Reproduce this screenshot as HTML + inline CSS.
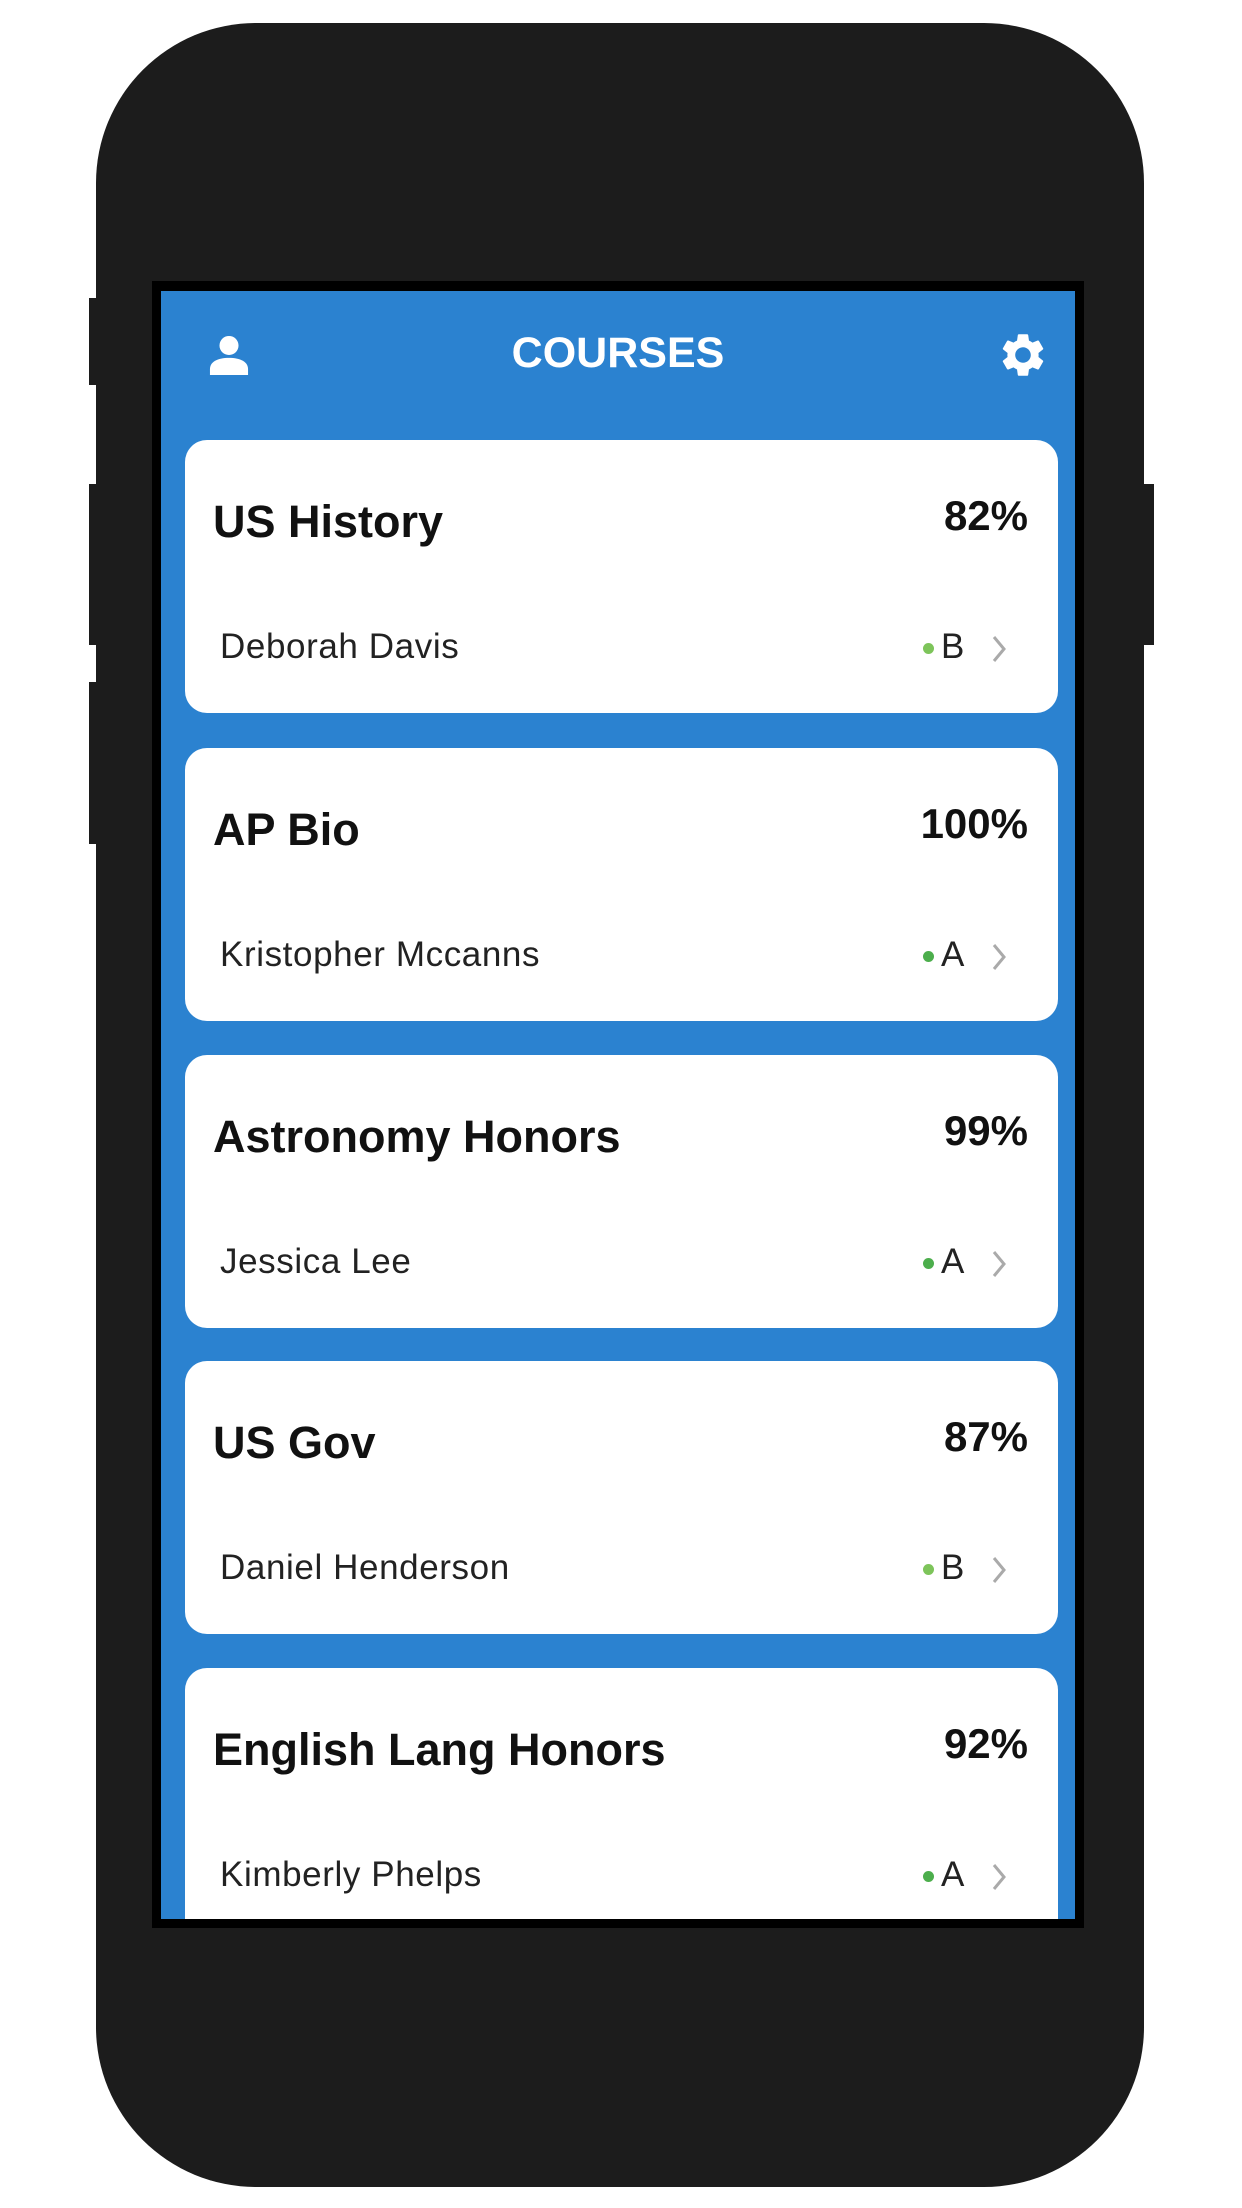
<!DOCTYPE html>
<html><head><meta charset="utf-8"><style>
*{margin:0;padding:0;box-sizing:border-box}
body{width:1242px;height:2208px;background:#fff;position:relative;overflow:hidden;font-family:"Liberation Sans",sans-serif}
.ph{position:absolute;left:96px;top:23px;width:1048px;height:2164px;background:#1c1c1c;border-radius:160px}
.btn{position:absolute;background:#1c1c1c}
.scr{position:absolute;left:152px;top:281px;width:932px;height:1647px;background:#000}
.blue{position:absolute;left:161px;top:291px;width:914px;height:1628px;background:#2b82d0;overflow:hidden}
.hd{position:absolute;width:100%;text-align:center;color:#fff;font-size:43px;font-weight:bold;left:0}
.card{position:absolute;left:24px;width:873px;height:273px;background:#fff;border-radius:22px}
.t{position:absolute;left:28px;top:56px;font-size:45px;font-weight:bold;color:#111}
.p{position:absolute;right:30px;top:52px;font-size:42px;font-weight:bold;color:#111}
.n{position:absolute;left:35px;top:187px;font-size:35px;letter-spacing:0.6px;color:#222}
.dot{position:absolute;left:738px;top:203px;width:11px;height:11px;border-radius:50%;background:#7dc45a}
.g{position:absolute;left:756px;top:187px;font-size:35px;color:#222}
.ch{position:absolute;left:806px;top:194px}
</style></head><body>
<div class="btn" style="left:89px;top:298px;width:12px;height:87px"></div>
<div class="btn" style="left:89px;top:484px;width:12px;height:161px"></div>
<div class="btn" style="left:89px;top:682px;width:12px;height:162px"></div>
<div class="btn" style="left:1140px;top:484px;width:14px;height:161px"></div>
<div class="ph"></div>
<div class="scr"></div>
<div class="blue">
<svg style="position:absolute;left:47px;top:44px" width="42" height="40" viewBox="0 0 44 42"><circle cx="22" cy="11" r="10" fill="#fff"/><path d="M2 42 v-6 c0-8 8-12 20-12 s20 4 20 12 v6z" fill="#fff"/></svg>
<div class="hd" style="top:38px">COURSES</div>
<svg style="position:absolute;left:836px;top:38px" width="52" height="52" viewBox="0 0 24 24"><path fill="#fff" d="M19.14 12.94c.04-.3.06-.61.06-.94 0-.32-.02-.64-.07-.94l2.030-1.58a.49.49 0 0 0 .12-.61l-1.92-3.32a.488.488 0 0 0-.59-.22l-2.39.96c-.5-.38-1.03-.7-1.62-.94l-.36-2.54a.484.484 0 0 0-.48-.41h-3.84c-.24 0-.43.17-.47.41l-.36 2.54c-.59.24-1.130.57-1.62.94l-2.39-.96c-.22-.08-.47 0-.59.22L2.74 8.87c-.12.21-.08.47.12.61l2.03 1.58c-.05.3-.09.63-.09.94s.02.64.07.94l-2.03 1.58a.49.49 0 0 0-.12.61l1.92 3.32c.12.22.37.29.59.22l2.39-.96c.5.38 1.03.7 1.62.94l.36 2.54c.05.24.24.41.48.41h3.84c.24 0 .44-.17.47-.41l.36-2.54c.59-.24 1.13-.56 1.62-.94l2.39.96c.22.08.47 0 .59-.22l1.92-3.32c.12-.22.07-.47-.12-.61l-2.01-1.58zM12 15.6c-1.98 0-3.6-1.62-3.6-3.6s1.62-3.6 3.6-3.6 3.6 1.62 3.6 3.6-1.62 3.6-3.6 3.6z"/></svg>

<div class="card" style="top:149px"><div class="t">US History</div><div class="p">82%</div><div class="n">Deborah Davis</div><div class="dot"></div><div class="g">B</div><svg class="ch" width="16" height="30" viewBox="0 0 16 30"><path d="M3 3 L13 15 L3 27" stroke="#aaa" stroke-width="3" fill="none"/></svg></div>
<div class="card" style="top:457px"><div class="t">AP Bio</div><div class="p">100%</div><div class="n">Kristopher Mccanns</div><div class="dot" style="background:#4cae4c"></div><div class="g">A</div><svg class="ch" width="16" height="30" viewBox="0 0 16 30"><path d="M3 3 L13 15 L3 27" stroke="#aaa" stroke-width="3" fill="none"/></svg></div>
<div class="card" style="top:764px"><div class="t">Astronomy Honors</div><div class="p">99%</div><div class="n">Jessica Lee</div><div class="dot" style="background:#4cae4c"></div><div class="g">A</div><svg class="ch" width="16" height="30" viewBox="0 0 16 30"><path d="M3 3 L13 15 L3 27" stroke="#aaa" stroke-width="3" fill="none"/></svg></div>
<div class="card" style="top:1070px"><div class="t">US Gov</div><div class="p">87%</div><div class="n">Daniel Henderson</div><div class="dot"></div><div class="g">B</div><svg class="ch" width="16" height="30" viewBox="0 0 16 30"><path d="M3 3 L13 15 L3 27" stroke="#aaa" stroke-width="3" fill="none"/></svg></div>
<div class="card" style="top:1377px"><div class="t">English Lang Honors</div><div class="p">92%</div><div class="n">Kimberly Phelps</div><div class="dot" style="background:#4cae4c"></div><div class="g">A</div><svg class="ch" width="16" height="30" viewBox="0 0 16 30"><path d="M3 3 L13 15 L3 27" stroke="#aaa" stroke-width="3" fill="none"/></svg></div>
</div>
</body></html>
